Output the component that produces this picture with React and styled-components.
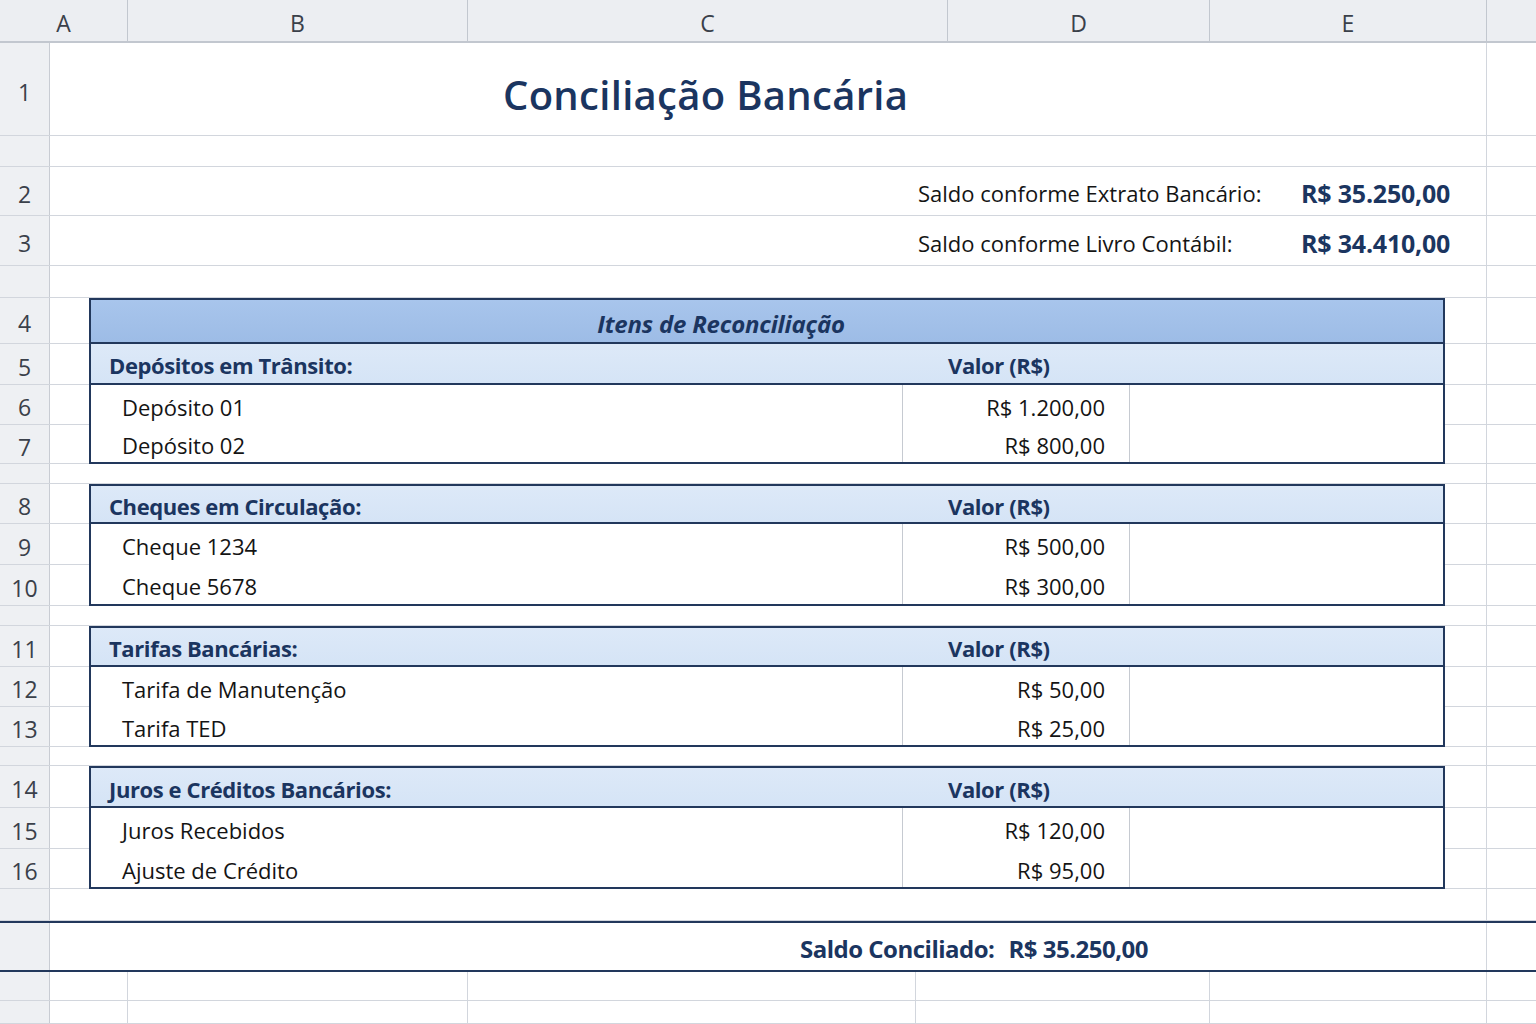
import styled, { createGlobalStyle, css } from 'styled-components'

const NAVY = '#1b3560'
const EDGE = '#22385c'
const GRID = '#d2d6dd'
const HEAD_LINE = '#c2c7cf'

const GlobalStyle = createGlobalStyle`
  html, body {
    margin: 0;
    padding: 0;
    background: #fff;
  }
  body {
    font-family: "Open Sans", "Noto Sans", sans-serif;
    color: #141414;
  }
`

const Sheet = styled.div`
  width: 1536px;
  height: 1024px;
  overflow: hidden;
  display: flex;
  flex-direction: column;
  background: #fff;
`

const ColBar = styled.div`
  display: flex;
  flex: none;
  height: 43px;
  box-sizing: border-box;
  background: #eceef2;
  border-bottom: 2px solid ${HEAD_LINE};
`

const ColHead = styled.div`
  width: ${p => p.$w}px;
  flex: none;
  box-sizing: border-box;
  display: flex;
  align-items: center;
  justify-content: center;
  padding-top: 4px;
  border-right: 1px solid ${HEAD_LINE};
  font-size: 23px;
  color: #3a404a;

  &:last-child {
    flex: 1;
    border-right: none;
  }
`

const Row = styled.div`
  display: flex;
  flex: none;
  height: ${p => p.$h}px;
  box-sizing: border-box;
  border-bottom: 1px solid ${GRID};

  ${p => p.$total && css`
    border-top: 2px solid ${EDGE};
    border-bottom: 2px solid ${EDGE};
  `}
`

const RowNum = styled.div`
  width: 50px;
  flex: none;
  box-sizing: border-box;
  display: flex;
  align-items: center;
  justify-content: center;
  padding-top: 5px;
  background: #eef0f3;
  border-right: 1px solid #c8ccd3;
  font-size: 23px;
  color: #3a404a;
`

const Lane = styled.div`
  width: 1437px;
  flex: none;
  box-sizing: border-box;
  display: flex;
  align-items: stretch;
  border-right: 1px solid ${GRID};
`

const GridCell = styled.div`
  width: ${p => p.$w}px;
  flex: none;
  box-sizing: border-box;
  border-right: 1px solid ${GRID};

  &:last-child {
    border-right: none;
  }
`

const Title = styled.h1`
  margin: 0;
  padding: 10px 0 0 453px;
  display: flex;
  align-items: center;
  font-size: 40px;
  font-weight: 600;
  color: ${NAVY};
  letter-spacing: 0.3px;
`

const Summary = styled.div`
  display: flex;
  align-items: center;
  padding: 4px 0 0 868px;
  font-size: 22px;
`

const SummaryLabel = styled.span`
  width: 383px;
  flex: none;
`

const SummaryValue = styled.span`
  font-weight: 700;
  font-size: 25px;
  color: ${NAVY};
  letter-spacing: -0.2px;
`

const TableRow = styled.div`
  margin-left: 39px;
  width: 1356px;
  height: calc(100% + 1px);
  box-sizing: border-box;
  display: flex;
  align-items: stretch;
  border-left: 2px solid ${EDGE};
  border-right: 2px solid ${EDGE};
  background: #fff;

  ${p => p.$top && css`border-top: 2px solid ${EDGE};`}
  ${p => p.$bottom && css`border-bottom: 2px solid ${EDGE};`}
  ${p => p.$kind === 'title' && css`
    background: linear-gradient(180deg, #a8c5ec 0%, #9dbce6 100%);
    border-bottom: 2px solid ${EDGE};
  `}
  ${p => p.$kind === 'head' && css`
    background: linear-gradient(180deg, #dde9f8 0%, #d5e4f6 100%);
    border-bottom: 2px solid ${EDGE};
  `}
`

const TableTitle = styled.div`
  flex: 1;
  display: flex;
  align-items: center;
  justify-content: center;
  padding: 5px 92px 0 0;
  font-size: 24px;
  font-weight: 700;
  font-style: italic;
  color: ${NAVY};
  letter-spacing: -0.2px;
`

const Cell = styled.div`
  box-sizing: border-box;
  display: flex;
  align-items: center;
  padding-top: 3px;
  font-size: 22px;

  ${p => p.$col === 1 && css`
    width: 812px;
    padding-left: 31px;
  `}
  ${p => p.$col === 2 && css`
    width: 227px;
    justify-content: flex-end;
    padding-right: 24px;
  `}
  ${p => p.$col === 3 && css`
    flex: 1;
  `}
  ${p => !p.$head && p.$col !== 3 && css`
    border-right: 1px solid #c6cad1;
  `}
  ${p => p.$head && css`
    font-size: 22px;
    font-weight: 700;
    color: ${NAVY};
    letter-spacing: -0.4px;
  `}
  ${p => p.$head && p.$col === 1 && css`padding-left: 18px;`}
  ${p => p.$head && p.$col === 2 && css`
    justify-content: flex-start;
    padding-left: 45px;
    padding-right: 0;
    white-space: nowrap;
  `}
`

const Total = styled.div`
  display: flex;
  align-items: center;
  gap: 14px;
  padding: 3px 0 0 750px;
  font-size: 24px;
  font-weight: 700;
  color: ${NAVY};
  letter-spacing: -0.5px;
`

const columns = [
  ['A', 128],
  ['B', 340],
  ['C', 480],
  ['D', 262],
  ['E', 277],
  ['', 49],
]

const sections = [
  {
    num: 5,
    heights: [41, 40, 39],
    label: 'Depósitos em Trânsito:',
    items: [['Depósito 01', 'R$ 1.200,00'], ['Depósito 02', 'R$ 800,00']],
    titled: true,
  },
  {
    num: 8,
    heights: [40, 41, 41],
    label: 'Cheques em Circulação:',
    items: [['Cheque 1234', 'R$ 500,00'], ['Cheque 5678', 'R$ 300,00']],
  },
  {
    num: 11,
    heights: [41, 40, 40],
    label: 'Tarifas Bancárias:',
    items: [['Tarifa de Manutenção', 'R$ 50,00'], ['Tarifa TED', 'R$ 25,00']],
  },
  {
    num: 14,
    heights: [42, 41, 40],
    label: 'Juros e Créditos Bancários:',
    items: [['Juros Recebidos', 'R$ 120,00'], ['Ajuste de Crédito', 'R$ 95,00']],
  },
]

const gapAfter = [20, 20, 19, 32]

const SheetRow = ({ num, h, total, children }) => (
  <Row $h={h} $total={total}>
    <RowNum>{num}</RowNum>
    <Lane>{children}</Lane>
  </Row>
)

const Section = ({ section, gap }) => (
  <>
    <SheetRow num={section.num} h={section.heights[0]}>
      <TableRow $kind="head" $top={!section.titled}>
        <Cell $col={1} $head>{section.label}</Cell>
        <Cell $col={2} $head>Valor (R$)</Cell>
        <Cell $col={3} $head />
      </TableRow>
    </SheetRow>
    {section.items.map(([name, value], i) => (
      <SheetRow key={name} num={section.num + i + 1} h={section.heights[i + 1]}>
        <TableRow $bottom={i === section.items.length - 1}>
          <Cell $col={1}>{name}</Cell>
          <Cell $col={2}>{value}</Cell>
          <Cell $col={3} />
        </TableRow>
      </SheetRow>
    ))}
    <SheetRow h={gap} />
  </>
)

const BlankGridRow = ({ h }) => (
  <Row $h={h}>
    <RowNum />
    <Lane>
      <GridCell $w={78} />
      <GridCell $w={340} />
      <GridCell $w={448} />
      <GridCell $w={294} />
      <GridCell $w={277} />
    </Lane>
  </Row>
)

export default function App() {
  return (
    <>
      <GlobalStyle />
      <Sheet>
        <ColBar>
          {columns.map(([name, w], i) => (
            <ColHead key={i} $w={w}>{name}</ColHead>
          ))}
        </ColBar>

        <SheetRow num={1} h={93}>
          <Title>Conciliação Bancária</Title>
        </SheetRow>
        <SheetRow h={31} />
        <SheetRow num={2} h={49}>
          <Summary>
            <SummaryLabel>Saldo conforme Extrato Bancário:</SummaryLabel>
            <SummaryValue>R$ 35.250,00</SummaryValue>
          </Summary>
        </SheetRow>
        <SheetRow num={3} h={50}>
          <Summary>
            <SummaryLabel>Saldo conforme Livro Contábil:</SummaryLabel>
            <SummaryValue>R$ 34.410,00</SummaryValue>
          </Summary>
        </SheetRow>
        <SheetRow h={32} />

        <SheetRow num={4} h={46}>
          <TableRow $kind="title" $top>
            <TableTitle>Itens de Reconciliação</TableTitle>
          </TableRow>
        </SheetRow>

        {sections.map((s, i) => (
          <Section key={s.num} section={s} gap={gapAfter[i]} />
        ))}

        <SheetRow h={51} total>
          <Total>
            <span>Saldo Conciliado:</span>
            <span>R$ 35.250,00</span>
          </Total>
        </SheetRow>
        <BlankGridRow h={29} />
        <BlankGridRow h={23} />
      </Sheet>
    </>
  )
}
